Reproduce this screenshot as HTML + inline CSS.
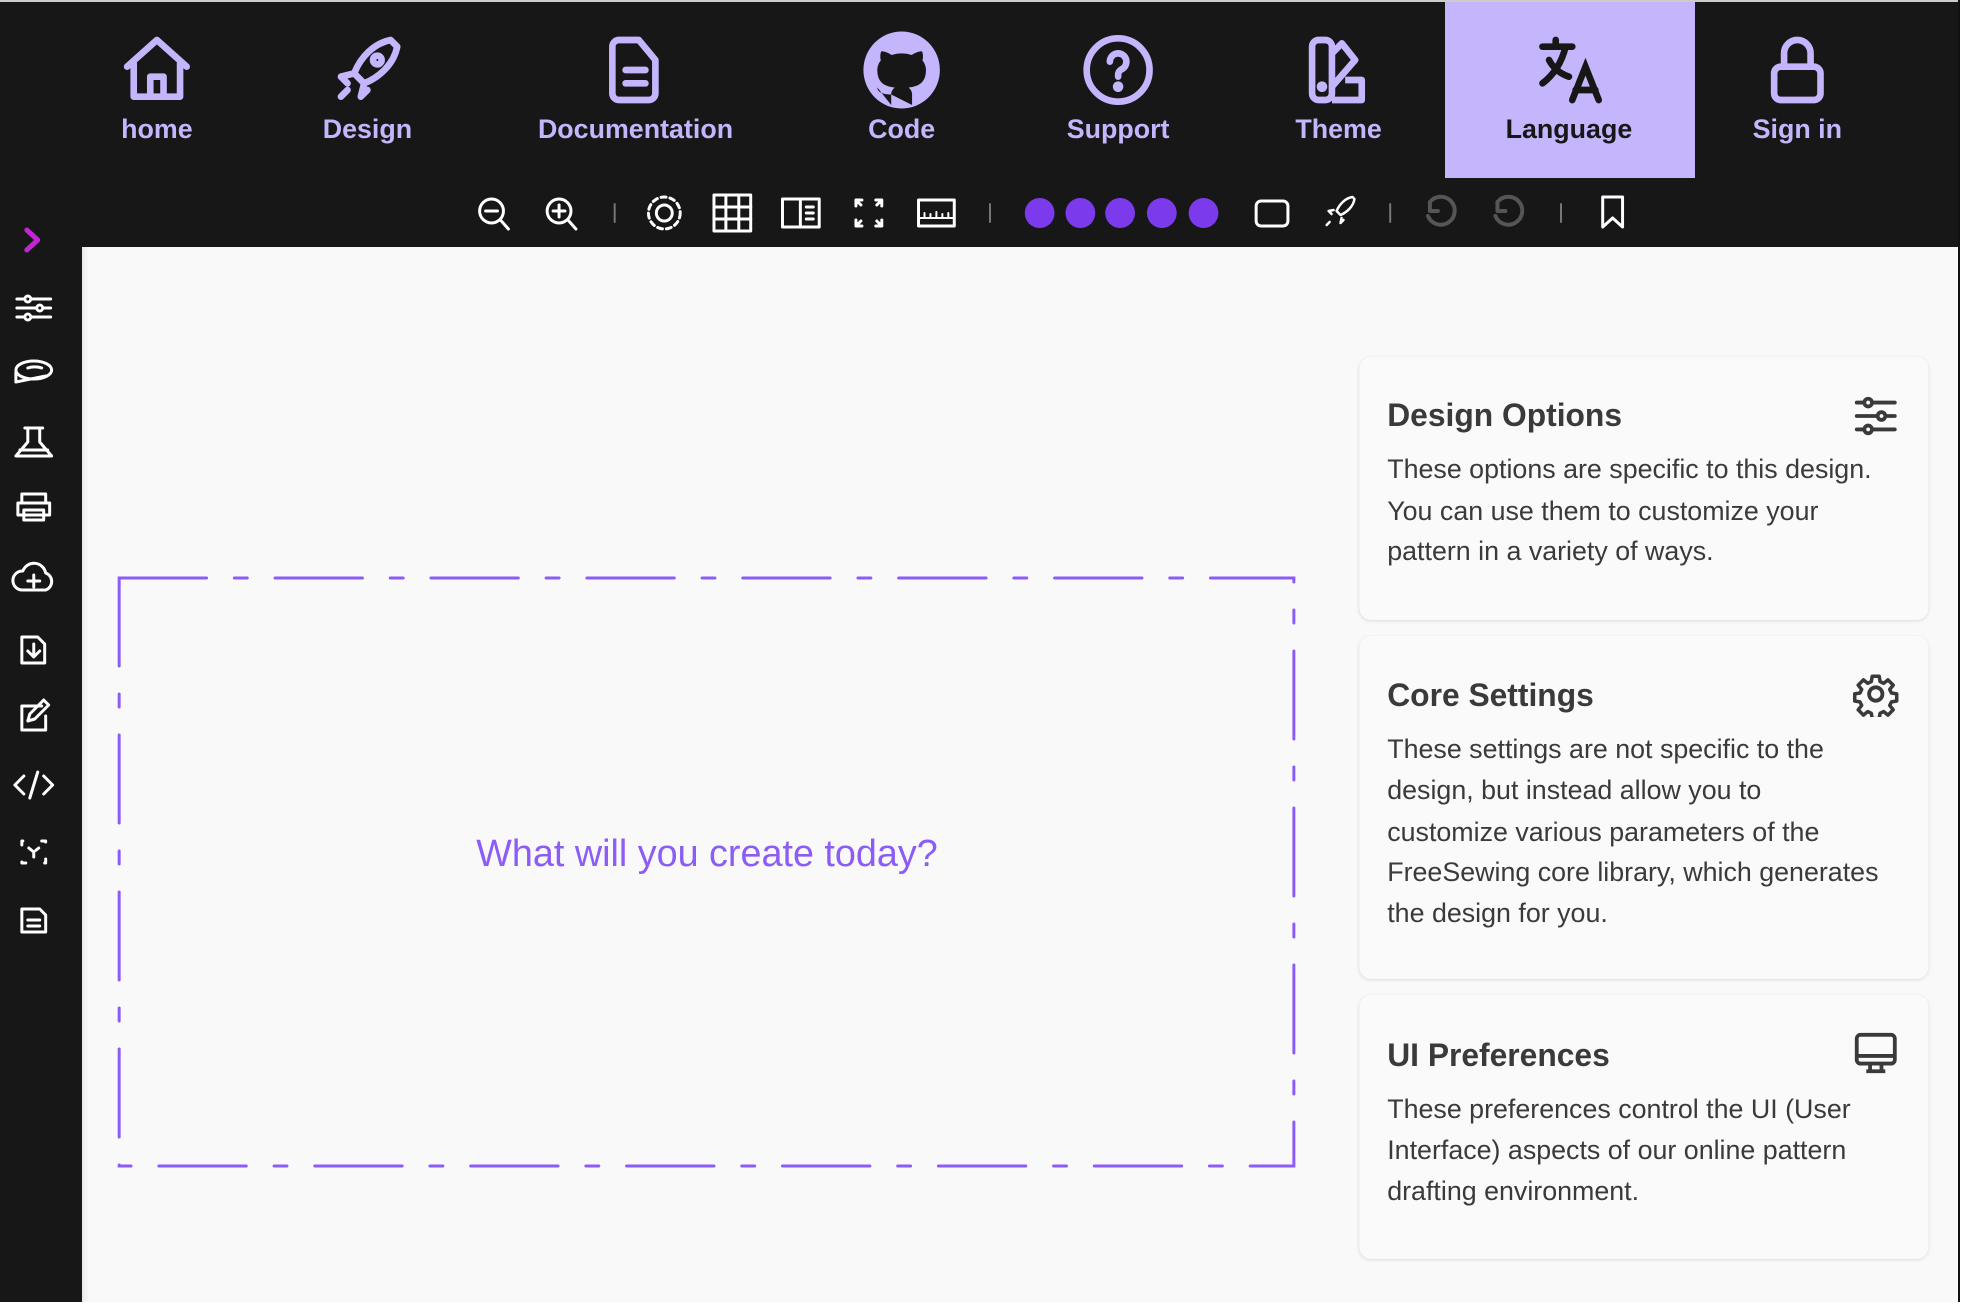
<!DOCTYPE html>
<html><head><meta charset="utf-8"><style>
*{margin:0;padding:0;box-sizing:border-box}
body{width:1974px;height:1313px;background:#fff;position:relative;overflow:hidden;font-family:"Liberation Sans",sans-serif}
.a{position:absolute}
.nav{left:0;top:0;width:1960px;height:247px;background:#171717;border-top:2px solid #ccc}
.side{left:0;top:247px;width:82px;height:1055px;background:#171717}
.main{left:82px;top:247px;width:1878px;height:1055px;background:#f9f9f9;box-shadow:inset 6px 0 8px -6px rgba(0,0,0,.15)}
.edge{left:1958px;top:0;width:2px;height:1302px;background:#111}
.wrap{position:absolute;left:0;top:0;width:1974px;height:1313px;transform:scale(0.993,1);transform-origin:0 0}
.lbl{color:#c4b5fd;font-weight:bold;font-size:27px;text-align:center;width:300px;top:114px}
.ic{position:absolute}
.card{background:#fafafa;border-radius:12px;box-shadow:0 1px 4px rgba(0,0,0,.12);left:1369px;width:573px}
.t{color:#3a3a3a;font-size:32px;font-weight:bold;left:1397px;white-space:nowrap}
.b{color:#3a3a3a;font-size:27px;left:1397px;white-space:nowrap;line-height:32px}
</style></head><body>
<div class="a nav"></div>
<div class="a" style="left:1445px;top:2px;width:250px;height:176px;background:#c4b5fd"></div>
<div class="a side"></div>
<div class="a main"></div>
<div class="a edge"></div>
<div class="wrap">

<svg class="ic" style="left:118px;top:30px" width="80" height="80" viewBox="0 0 24 24" fill="none" stroke="#c4b5fd" stroke-width="2" stroke-linecap="round" stroke-linejoin="round"><path d="M3 11L12 3l9 8M5 10v10h14V10M10 20v-6h4v6"/></svg>
<svg class="ic" style="left:330px;top:30px" width="80" height="80" viewBox="0 0 24 24" fill="none" stroke="#c4b5fd" stroke-width="2" stroke-linecap="round" stroke-linejoin="round"><path d="M19 3c-5 1-9 5-11 10l3 3c5-2 9-6 10-11z"/><circle cx="15" cy="9" r="1.3"/><path d="M8 13l-4 1 2 2M11 16l-1 4 2-2M6 18l-2 2"/></svg>
<svg class="ic" style="left:600px;top:30px" width="80" height="80" viewBox="0 0 24 24" fill="none" stroke="#c4b5fd" stroke-width="2" stroke-linecap="round" stroke-linejoin="round"><path d="M7 3h6l5 6v10a2 2 0 0 1-2 2H7a2 2 0 0 1-2-2V5a2 2 0 0 1 2-2z"/><path d="M9 12h6M9 16h6"/></svg>
<svg class="ic" style="left:866px;top:28px" width="84" height="84" viewBox="0 0 24 24"><circle cx="12" cy="12" r="11" fill="#c4b5fd"/><path d="M9 22v-3c-3 0-4-1-4-2M15 22v-3c0-1-.5-1.5-1-2 3-.3 5-1.5 5-5 0-1-.4-2-1-2.7.2-.8.2-1.8-.1-2.6 0 0-1-.3-3 1a10 10 0 0 0-5.8 0c-2-1.3-3-1-3-1-.3.8-.3 1.8-.1 2.6C5.4 10 5 11 5 12c0 3.5 2 4.7 5 5-.5.5-1 1-1 2" fill="#171717"/></svg>
<svg class="ic" style="left:1086px;top:30px" width="80" height="80" viewBox="0 0 24 24" fill="none" stroke="#c4b5fd" stroke-width="2" stroke-linecap="round"><circle cx="12" cy="12" r="9.5"/><path d="M9.5 9.5a2.5 2.5 0 1 1 3.5 2.3c-.7.4-1 .9-1 1.7v.5"/><circle cx="12" cy="17" r=".6" fill="#c4b5fd"/></svg>
<svg class="ic" style="left:1308px;top:30px" width="80" height="80" viewBox="0 0 24 24" fill="none" stroke="#c4b5fd" stroke-width="2" stroke-linejoin="round"><rect x="4" y="3" width="6" height="18" rx="2"/><path d="M10 7l3-3 4 5-7 8M10 21h9v-6h-5"/><circle cx="7" cy="17" r=".6" fill="#c4b5fd"/></svg>
<svg class="ic" style="left:1540px;top:30px" width="80" height="80" viewBox="0 0 24 24" fill="none" stroke="#171717" stroke-width="2" stroke-linecap="round"><path d="M4 5h9M8 3v2M11 5c-1 4-3 8-7 11M6 9c1 2 3 4 6 5M13 21l4-10 4 10M14 18h6"/></svg>
<svg class="ic" style="left:1770px;top:30px" width="80" height="80" viewBox="0 0 24 24" fill="none" stroke="#c4b5fd" stroke-width="2"><rect x="5" y="11" width="14" height="10" rx="2"/><path d="M8 11V7a4 4 0 0 1 8 0v4"/></svg>

<div class="a lbl" style="left:8px">home</div>
<div class="a lbl" style="left:220px">Design</div>
<div class="a lbl" style="left:490px">Documentation</div>
<div class="a lbl" style="left:758px">Code</div>
<div class="a lbl" style="left:976px">Support</div>
<div class="a lbl" style="left:1198px">Theme</div>
<div class="a lbl" style="left:1430px;color:#171717">Language</div>
<div class="a lbl" style="left:1660px">Sign in</div>

<svg class="a" style="left:0;top:180px" width="1960" height="66" fill="none" stroke="#fff" stroke-width="3" stroke-linecap="round" stroke-linejoin="round">
<circle cx="495" cy="31" r="12"/><path d="M504 40l8 9M489 31h12"/>
<circle cx="563" cy="31" r="12"/><path d="M572 40l8 9M557 31h12M563 25v12"/>
<path d="M619 24v18M997 24v18M1400 24v18M1572 24v18" stroke="#777" stroke-width="2"/>
<circle cx="669" cy="33" r="16" stroke-dasharray="5 4"/><circle cx="669" cy="33" r="8"/>
<rect x="719" y="15" width="37" height="36"/><path d="M731 15v36M744 15v36M719 27h37M719 39h37"/>
<rect x="788" y="19" width="37" height="28"/><path d="M806 19v28M812 27h7M812 33h7M812 39h7"/>
<path d="M862 20l5 5M862 20v6M862 20h6M888 20l-5 5M888 20v6M888 20h-6M862 46l5-5M862 46v-6M862 46h6M888 46l-5-5M888 46v-6M888 46h-6"/>
<rect x="925" y="20" width="36" height="26"/><path d="M925 38h36M931 38v-5M937 38v-4M943 38v-6M949 38v-4M955 38v-5" stroke-width="2"/>
<g fill="#7c3aed" stroke="none"><circle cx="1047" cy="33" r="15"/><circle cx="1088" cy="33" r="15"/><circle cx="1128" cy="33" r="15"/><circle cx="1170" cy="33" r="15"/><circle cx="1212" cy="33" r="15"/></g>
<rect x="1265" y="21" width="32" height="25" rx="5"/>
<path d="M1362 17c-7 1-13 7-16 14l4 4c7-3 13-9 14-16z M1343 30l-5 1 3 3M1351 38l-1 5 3-3M1339 42l-3 3" stroke-width="2.5"/>
<path d="M1440 22a14 14 0 1 1-2 14M1440 22v9h8" stroke="#555" stroke-width="4"/>
<path d="M1508 22a14 14 0 1 1-2 14M1508 22v9h8" stroke="#555" stroke-width="4"/>
<path d="M1614 17h20v30l-10-9-10 9z"/>
</svg>

<svg class="a" style="left:0;top:220px" width="82" height="730" fill="none" stroke="#fff" stroke-width="3" stroke-linecap="round" stroke-linejoin="round">
<path d="M27 10l11 10-11 10" stroke="#c026d3" stroke-width="5"/>
<path d="M17 79h34M17 88h34M17 97h34"/><circle cx="28" cy="79" r="3" fill="#171717"/><circle cx="40" cy="88" r="3" fill="#171717"/><circle cx="28" cy="97" r="3" fill="#171717"/>
<ellipse cx="34" cy="150" rx="18" ry="9"/><path d="M16 152v10l30-6M28 148a10 4 0 0 1 14 0"/>
<path d="M28 208v14l-12 14h36l-12-14v-14M25 208h18M20 230h28"/>
<path d="M22 282v-8h24v8M18 283h32v12H18zM24 290h20v10H24z"/>
<path d="M22 370h24a9 9 0 0 0 0-17 12 12 0 0 0-23-2 9 9 0 0 0-1 19zM34 355v12M28 361h12"/>
<path d="M22 417h16l7 7v19H22zM34 424v12M28 431l6 6 6-6"/>
<path d="M42 486H22v24h24v-14M28 501l2-7 14-14 5 5-14 14z"/>
<path d="M24 556l-9 9 9 9M44 556l9 9-9 9M38 552l-8 26"/>
<path d="M22 625v-4h4M42 621h4v4M46 639v4h-4M26 643h-4v-4M29 628l5 4 5-4M34 632v6" stroke-dasharray="5 4"/>
<path d="M22 689h18l6 6v17H22zM28 700h12M28 706h12"/>
</svg>

<svg class="a" style="left:110px;top:568px" width="1210" height="620"><rect x="10" y="10" width="1183" height="588" fill="none" stroke="#8b5cf6" stroke-width="3" stroke-linecap="round" stroke-dasharray="88 28 13 28"/></svg>
<div class="a" style="left:212px;top:833px;width:1000px;text-align:center;color:#8b5cf6;font-size:38px">What will you create today?</div>

<div class="a card" style="top:357px;height:263px"></div>
<div class="a card" style="top:636px;height:343px"></div>
<div class="a card" style="top:995px;height:264px"></div>

<div class="a t" style="top:397px">Design Options</div>
<div class="a b" style="top:453px">These options are specific to this design.</div>
<div class="a b" style="top:495px">You can use them to customize your</div>
<div class="a b" style="top:535px">pattern in a variety of ways.</div>

<div class="a t" style="top:677px">Core Settings</div>
<div class="a b" style="top:733px">These settings are not specific to the</div>
<div class="a b" style="top:774px">design, but instead allow you to</div>
<div class="a b" style="top:816px">customize various parameters of the</div>
<div class="a b" style="top:856px">FreeSewing core library, which generates</div>
<div class="a b" style="top:897px">the design for you.</div>

<div class="a t" style="top:1037px">UI Preferences</div>
<div class="a b" style="top:1093px">These preferences control the UI (User</div>
<div class="a b" style="top:1134px">Interface) aspects of our online pattern</div>
<div class="a b" style="top:1175px">drafting environment.</div>

<svg class="a" style="left:1866px;top:393px" width="46" height="46" viewBox="0 0 24 24" fill="none" stroke="#3a3a3a" stroke-width="2" stroke-linecap="round"><path d="M2 5h20M2 12h20M2 19h20"/><circle cx="8" cy="5" r="2" fill="#fafafa"/><circle cx="15" cy="12" r="2" fill="#fafafa"/><circle cx="8" cy="19" r="2" fill="#fafafa"/></svg>
<svg class="a" style="left:1866px;top:671px" width="46" height="46" viewBox="0 0 24 24" fill="none" stroke="#3a3a3a" stroke-width="2" stroke-linejoin="round"><path d="M10 2h4l.5 3 2 1 2.5-2 3 3-2 2.5 1 2 3 .5v4l-3 .5-1 2 2 2.5-3 3-2.5-2-2 1-.5 3h-4l-.5-3-2-1-2.5 2-3-3 2-2.5-1-2-3-.5v-4l3-.5 1-2-2-2.5 3-3 2.5 2 2-1z" transform="scale(.92) translate(1 1)"/><circle cx="12" cy="12" r="3.5"/></svg>
<svg class="a" style="left:1866px;top:1031px" width="46" height="46" viewBox="0 0 24 24" fill="none" stroke="#3a3a3a" stroke-width="2" stroke-linejoin="round"><rect x="2" y="2" width="20" height="15" rx="2"/><path d="M2 13h20M9 17v3M15 17v3M7 21h10"/></svg>
</div>
</body></html>
